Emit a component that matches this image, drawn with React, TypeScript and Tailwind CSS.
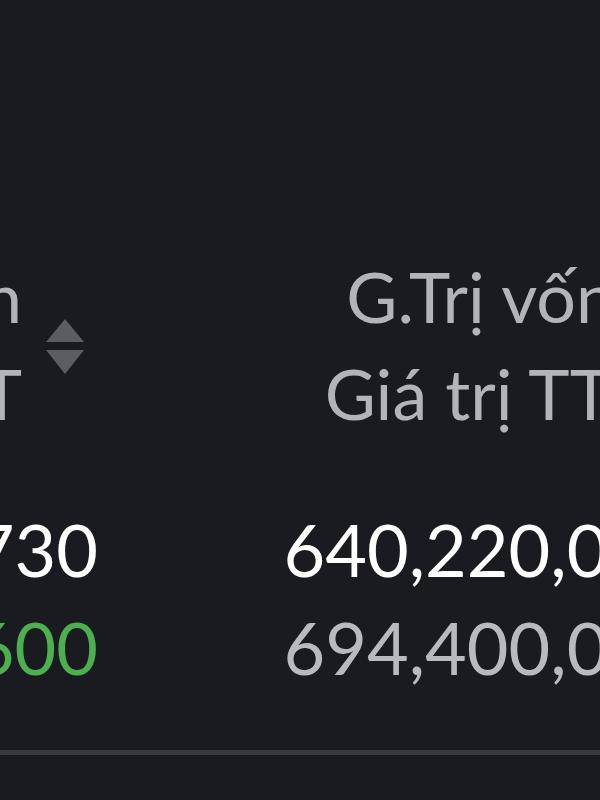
import React from "react";

function SortIcon() {
  return (
    <svg width="38" height="56" viewBox="0 0 38 56" className="shrink-0">
      <polygon points="19,0 38,23 0,23" fill="#5c5d62" />
      <polygon points="0,31 38,31 19,55" fill="#5c5d62" />
    </svg>
  );
}

export default function App() {
  return (
    <div
      className="w-[600px] h-[800px] bg-[#1a1b20] overflow-hidden"
      style={{ fontFamily: "Lato, 'Noto Sans', sans-serif" }}
    >
      <div className="w-[800px] pt-[248px]">
        {/* Header */}
        <div className="flex text-[70px] leading-[97px] text-[#b3b4b9]">
          <div className="w-[97px] shrink-0 flex justify-end items-center pr-[13px]">
            <div className="text-right whitespace-nowrap shrink-0">
              <div>Giá vốn</div>
              <div>Giá TT</div>
            </div>
            <div className="ml-[24px] mt-[4px] shrink-0 flex items-center">
              <SortIcon />
            </div>
          </div>
          <div className="w-[595px] shrink-0 flex justify-end items-center pr-[17px]">
            <div className="text-right whitespace-nowrap shrink-0">
              <div className="pr-[2px]">G.Trị vốn</div>
              <div className="pr-[6px]">Giá trị TT</div>
            </div>
            <div className="ml-[20px] mt-[4px] shrink-0 flex items-center">
              <SortIcon />
            </div>
          </div>
        </div>

        {/* Rows */}
        <div className="mt-[58px] text-[72px] leading-[98px]">
          <div className="flex">
            <div className="w-[98px] shrink-0 flex justify-end text-white whitespace-nowrap">
              <span className="shrink-0">16,730</span>
            </div>
            <div className="w-[594px] shrink-0 flex justify-end text-white whitespace-nowrap">
              <span className="shrink-0">640,220,000</span>
            </div>
          </div>
          <div className="flex">
            <div className="w-[98px] shrink-0 flex justify-end text-[#4caf50] whitespace-nowrap">
              <span className="shrink-0">18,600</span>
            </div>
            <div className="w-[594px] shrink-0 flex justify-end text-[#b9babe] whitespace-nowrap">
              <span className="shrink-0">694,400,000</span>
            </div>
          </div>
        </div>
      </div>
      <div className="mt-[54px] h-[5px] w-full bg-[#38393e]" />
    </div>
  );
}
